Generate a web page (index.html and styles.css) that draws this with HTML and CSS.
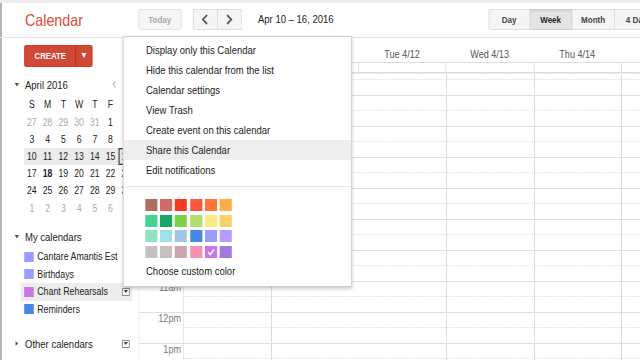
FILE: index.html
```html
<!DOCTYPE html>
<html lang="en">
<head>
<meta charset="utf-8">
<title>Calendar</title>
<link rel="stylesheet" href="styles.css">
</head>
<body>
<div class="app">
  <div class="strip"></div>
  <header class="toolbar">
    <div class="logo">Calendar</div>
    <button class="btn today">Today</button>
    <div class="nav">
      <button class="btn"><svg width="10" height="11" viewBox="0 0 10 11"><polyline points="7.5,1 2.5,5.5 7.5,10" fill="none" stroke="#555" stroke-width="1.8"/></svg></button>
      <button class="btn"><svg width="10" height="11" viewBox="0 0 10 11"><polyline points="2.5,1 7.5,5.5 2.5,10" fill="none" stroke="#555" stroke-width="1.8"/></svg></button>
    </div>
    <div class="range">Apr 10 – 16, 2016</div>
    <div class="views">
      <button class="btn v1">Day</button>
      <button class="btn v2 on">Week</button>
      <button class="btn v3">Month</button>
      <button class="btn v4">4 Days</button>
    </div>
  </header>
  <div class="body">
    <aside class="sidebar">
      <div class="create"><span class="create-label">CREATE</span><span class="create-drop"><svg width="6" height="5" viewBox="0 0 6 5"><polygon points="0,0 6,0 3,5" fill="#fff"/></svg></span></div>
      <div class="stitle mtitle"><svg class="tri" width="5" height="4" viewBox="0 0 5 4"><polygon points="0,0 5,0 2.5,3.5" fill="#555"/></svg>April 2016<svg class="prev" width="4" height="7" viewBox="0 0 4 7"><polyline points="3.3,0.5 0.8,3.5 3.3,6.5" fill="none" stroke="#999" stroke-width="1"/></svg></div>
      <div class="mgrid">
        <span>S</span><span>M</span><span>T</span><span>W</span><span>T</span><span>F</span><span>S</span>
        <span class="o">27</span><span class="o">28</span><span class="o">29</span><span class="o">30</span><span class="o">31</span><span>1</span><span>2</span>
        <span>3</span><span>4</span><span>5</span><span>6</span><span>7</span><span>8</span><span>9</span>
        <span class="w">10</span><span class="w">11</span><span class="w">12</span><span class="w">13</span><span class="w">14</span><span class="w">15</span><span class="w t">16</span>
        <span>17</span><span class="b">18</span><span>19</span><span>20</span><span>21</span><span>22</span><span>23</span>
        <span>24</span><span>25</span><span>26</span><span>27</span><span>28</span><span>29</span><span>30</span>
        <span class="o">1</span><span class="o">2</span><span class="o">3</span><span class="o">4</span><span class="o">5</span><span class="o">6</span><span class="o">7</span>
      </div>
      <div class="stitle my"><svg class="tri" width="5" height="4" viewBox="0 0 5 4"><polygon points="0,0 5,0 2.5,3.5" fill="#555"/></svg>My calendars</div>
      <div class="cals">
        <div class="cal"><span class="sw lav"></span>Cantare Amantis Est</div>
        <div class="cal"><span class="sw lav"></span>Birthdays</div>
        <div class="cal on"><span class="sw pur"></span>Chant Rehearsals<span class="dd"><svg width="5" height="3" viewBox="0 0 5 3"><polygon points="0,0 5,0 2.5,3" fill="#444"/></svg></span></div>
        <div class="cal"><span class="sw blu"></span>Reminders</div>
      </div>
      <div class="stitle other"><svg class="tri" width="5" height="5" viewBox="0 0 5 5"><polygon points="1,0 4,2.5 1,5" fill="#555"/></svg>Other calendars<span class="dd"><svg width="5" height="3" viewBox="0 0 5 3"><polygon points="0,0 5,0 2.5,3" fill="#444"/></svg></span></div>
    </aside>
    <main class="main">
      <div class="dayhead">
        <div class="gut"></div>
        <div class="dh">Sun 4/10</div>
        <div class="dh">Mon 4/11</div>
        <div class="dh">Tue 4/12</div>
        <div class="dh">Wed 4/13</div>
        <div class="dh">Thu 4/14</div>
        <div class="dh">Fri 4/15</div>
      </div>
      <div class="allday">
        <div class="gut"></div>
        <div class="col"></div><div class="col"></div><div class="col"></div><div class="col"></div><div class="col"></div><div class="col"></div>
      </div>
      <div class="tgrid">
        <div class="tscroll">
          <div class="gutter">
            <div class="hr">4am</div><div class="hr">5am</div><div class="hr">6am</div><div class="hr">7am</div><div class="hr">8am</div><div class="hr">9am</div><div class="hr">10am</div><div class="hr">11am</div><div class="hr">12pm</div><div class="hr">1pm</div><div class="hr">2pm</div>
          </div>
          <div class="days">
            <div class="hr"><div class="half"></div></div><div class="hr"><div class="half"></div></div><div class="hr"><div class="half"></div></div><div class="hr"><div class="half"></div></div><div class="hr"><div class="half"></div></div><div class="hr"><div class="half"></div></div><div class="hr"><div class="half"></div></div><div class="hr"><div class="half"></div></div><div class="hr"><div class="half"></div></div><div class="hr"><div class="half"></div></div><div class="hr"><div class="half"></div></div>
          </div>
        </div>
      </div>
    </main>
  </div>
  <div class="menu">
    <div class="mi">Display only this Calendar</div>
    <div class="mi">Hide this calendar from the list</div>
    <div class="mi">Calendar settings</div>
    <div class="mi">View Trash</div>
    <div class="mi">Create event on this calendar</div>
    <div class="mi on">Share this Calendar</div>
    <div class="mi">Edit notifications</div>
    <div class="sep"></div>
    <div class="swatches">
      <span style="background:#ac725e"></span><span style="background:#d06b64"></span><span style="background:#f83a22"></span><span style="background:#fa573c"></span><span style="background:#ff7537"></span><span style="background:#ffad46"></span>
      <span style="background:#42d692"></span><span style="background:#16a765"></span><span style="background:#7bd148"></span><span style="background:#b3dc6c"></span><span style="background:#fbe983"></span><span style="background:#fad165"></span>
      <span style="background:#92e1c0"></span><span style="background:#9fe1e7"></span><span style="background:#9fc6e7"></span><span style="background:#4986e7"></span><span style="background:#9a9cff"></span><span style="background:#b99aff"></span>
      <span style="background:#c2c2c2"></span><span style="background:#cabdbf"></span><span style="background:#cca6ac"></span><span style="background:#f691b2"></span><span class="chk" style="background:#cd74e6"><svg width="14" height="12" viewBox="0 0 14 12"><polyline points="3.5,6 6,8.5 10.5,3.5" fill="none" stroke="#fff" stroke-width="1.6"/></svg></span><span style="background:#a47ae2"></span>
    </div>
    <div class="mi choose">Choose custom color</div>
  </div>
</div>
</body>
</html>
```
FILE: styles.css
```css
html, body {
  margin: 0;
  height: 100%;
  overflow: hidden;
  background: #fff;
}
body {
  font-family: "Liberation Sans", Arial, sans-serif;
  font-size: 11px;
  color: #222;
}
.app {
  position: relative;
  width: 740px;
  height: 360px;
  overflow: hidden;
  background: #fff;
  transform: scaleX(0.86486);
  transform-origin: 0 0;
  box-shadow: inset 2.3px 0 0 #b4b4b4;
}
.strip {
  height: 3px;
  background: #ececec;
}
.toolbar {
  display: flex;
  align-items: flex-start;
  height: 35px;
  box-sizing: border-box;
  padding-top: 6.3px;
  border-bottom: 1px solid #e5e5e5;
}
.logo {
  flex: 0 0 159.6px;
  box-sizing: border-box;
  padding-left: 28.9px;
  margin-top: 1.2px;
  font-size: 16.5px;
  line-height: 20px;
  color: #dd4b39;
}
.btn {
  font: bold 9.3px "Liberation Sans", Arial, sans-serif;
  height: 21px;
  box-sizing: border-box;
  border: 1px solid #dcdcdc;
  background: #f5f5f5;
  color: #444;
  border-radius: 2px;
  padding: 0;
  margin: 0;
  display: flex;
  align-items: center;
  justify-content: center;
}
.today {
  flex: 0 0 50.2px;
  color: #a8a8a8;
  border-color: #e2e2e2;
}
.nav {
  display: flex;
  margin-left: 13.4px;
}
.nav .btn {
  width: 28.35px;
}
.nav .btn:first-child {
  border-radius: 2px 0 0 2px;
}
.nav .btn:last-child {
  border-left: 0;
  border-radius: 0 2px 2px 0;
}
.range {
  flex: 0 0 266.3px;
  margin-left: 18.4px;
  line-height: 21px;
  font-size: 11px;
  color: #222;
}
.views {
  display: flex;
  flex: none;
}
.views .btn {
  border-radius: 0;
}
.views .btn + .btn {
  border-left: 0;
}
.views .v1 { width: 48.2px; border-radius: 2px 0 0 2px; }
.views .v2 { width: 48.9px; }
.views .v3 { width: 49.4px; }
.views .v4 { width: 56px; }
.views .on {
  background: #e4e4e4;
  border-color: #cfcfcf;
  color: #222;
  box-shadow: inset 0 1px 2px rgba(0, 0, 0, 0.1);
}
.body {
  display: flex;
  height: 322px;
}
.sidebar {
  flex: 0 0 159.6px;
}
.create {
  display: flex;
  margin: 7px 0 0 27.75px;
  width: 79px;
  height: 21.7px;
  box-sizing: border-box;
  background: #d14836;
  border: 1px solid #c53727;
  border-radius: 2px;
  color: #fff;
  font-weight: bold;
  font-size: 9px;
}
.create-label {
  flex: 1;
  display: flex;
  align-items: center;
  justify-content: center;
}
.create-drop {
  flex: 0 0 17.3px;
  display: flex;
  align-items: center;
  justify-content: center;
  border-left: 1px solid #b0301f;
}
.stitle {
  display: flex;
  align-items: center;
  height: 16px;
  padding-left: 17.3px;
  font-size: 11px;
  color: #222;
}
.tri {
  flex: none;
  margin-right: 6.6px;
}
.mtitle {
  margin-top: 10.3px;
}
.mtitle .prev {
  margin-left: auto;
  margin-right: 25.6px;
}
.mgrid {
  display: grid;
  grid-template-columns: repeat(7, 18.2px);
  grid-auto-rows: 17.2px;
  margin: 3.4px 0 0 27.75px;
  font-size: 10px;
  line-height: 17.2px;
  text-align: center;
  color: #222;
}
.mgrid .o { color: #aaa; }
.mgrid .b { font-weight: bold; }
.mgrid .w { background: #ebebeb; }
.mgrid .t { box-shadow: inset 0 0 0 1.3px #333; }
.my {
  margin-top: 12.2px;
}
.cals {
  margin-top: 2.9px;
}
.cal {
  display: flex;
  align-items: center;
  height: 17.6px;
  margin-left: 23.9px;
  width: 129.5px;
  padding-left: 3.85px;
  box-sizing: border-box;
  font-size: 10.2px;
  white-space: nowrap;
}
.cal.on {
  background: #ededed;
}
.sw {
  flex: none;
  width: 11.6px;
  height: 10px;
  margin-right: 3.75px;
}
.lav { background: #9a9cff; }
.pur { background: #cd74e6; }
.blu { background: #4986e7; }
.dd {
  flex: none;
  margin-left: auto;
  margin-right: 3.1px;
  width: 9.3px;
  height: 8px;
  box-sizing: border-box;
  border: 1px solid #888;
  background: #fff;
  display: flex;
  align-items: center;
  justify-content: center;
}
.other {
  margin-top: 17.7px;
}
.other .dd {
  margin-right: 9.3px;
}
.main {
  flex: 1;
  min-width: 0;
  overflow: hidden;
}
.dayhead {
  display: flex;
  height: 24px;
  align-items: flex-end;
}
.gut {
  flex: 0 0 52px;
}
.dh {
  flex: 0 0 101.3px;
  text-align: center;
  font-size: 10.5px;
  line-height: 14px;
  padding-bottom: 1px;
  color: #555;
}
.allday {
  display: flex;
  height: 11px;
  box-sizing: border-box;
  border-top: 1px solid #dcdcdc;
  border-bottom: 1px solid #dcdcdc;
}
.allday .col {
  flex: 0 0 101.3px;
  box-sizing: border-box;
  border-left: 1px solid #dcdcdc;
}
.tgrid {
  height: 300px;
  overflow: hidden;
  border-top: 1px solid #ececec;
}
.tscroll {
  display: flex;
  margin-top: -10px;
}
.gutter {
  flex: 0 0 52px;
  box-sizing: border-box;
  border-left: 1px solid #dcdcdc;
}
.hr {
  height: 31px;
  box-sizing: border-box;
  border-top: 1px solid #e0e0e0;
}
.gutter .hr {
  text-align: right;
  padding-right: 2.3px;
  font-size: 10.5px;
  line-height: 10px;
  color: #777;
}
.days {
  flex: 1;
  background-image: repeating-linear-gradient(to right, #dcdcdc 0, #dcdcdc 1px, transparent 1px, transparent 101.3px);
}
.half {
  height: 15px;
  box-sizing: border-box;
  border-bottom: 1px dotted #dedede;
}
.menu {
  position: absolute;
  left: 141.9px;
  top: 36px;
  width: 265.5px;
  box-sizing: border-box;
  background: #fff;
  border: 1px solid rgba(0, 0, 0, 0.2);
  box-shadow: 0 2px 4px rgba(0, 0, 0, 0.2);
  padding: 3px 0 5px;
}
.mi {
  line-height: 20px;
  padding-left: 25.9px;
  font-size: 11px;
  color: #222;
  white-space: nowrap;
}
.mi.on {
  background: #eee;
}
.sep {
  height: 1px;
  background: #e5e5e5;
  margin: 6px 0 12px;
}
.swatches {
  display: grid;
  grid-template-columns: repeat(6, 13.9px);
  grid-auto-rows: 12px;
  column-gap: 3.45px;
  row-gap: 3.5px;
  margin-left: 24.8px;
}
.swatches span {
  display: block;
}
.chk svg {
  display: block;
}
.choose {
  margin-top: 3.5px;
}
```
